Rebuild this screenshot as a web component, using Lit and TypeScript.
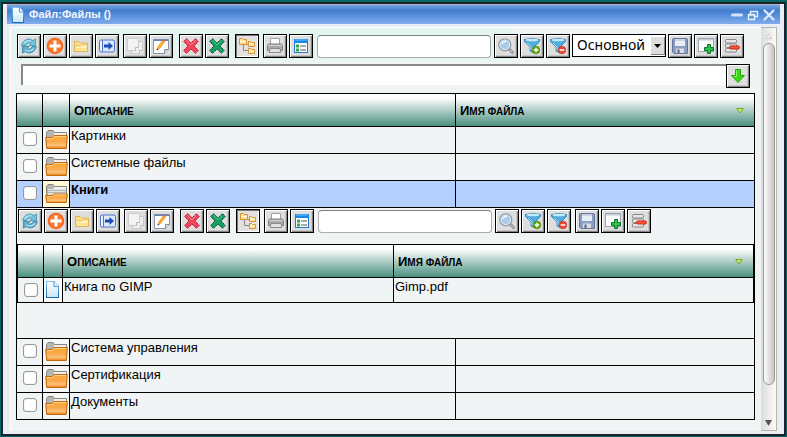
import { LitElement, html, css, svg } from "lit";
import { customElement, property } from "lit/decorators.js";

const icons: Record<string, unknown> = {
  refresh: svg`
    <path d="M.6 7.500C1.500 3 5.500.300 9.500 1.300L12 2.600 14.500.800V7.500H8L10 5.400C8 4.300 5.800 5 4.800 7.500Z" fill="#74c3dc" stroke="#3f93b0" stroke-width=".8"/>
    <path d="M15.400 8.500C14.500 13 10.500 15.700 6.500 14.700L4 13.400 1.500 15.200V8.500H8L6 10.600C8 11.700 10.200 11 11.200 8.500Z" fill="#5fb0d0" stroke="#35839f" stroke-width=".8"/>
    <path d="M2.500 5.800Q5.500 1.800 10 3M4 12Q9 14.500 13 10.500" fill="none" stroke="#b4e4f0" stroke-width="1.200"/>`,
  add: svg`
    <circle cx="8" cy="8" r="8.300" fill="#f4631c"/>
    <circle cx="8" cy="8" r="7" fill="#fb7a30"/>
    <path d="M6.500 2.500h3v4h4v3h-4v4h-3v-4h-4v-3h4z" fill="#fff"/>`,
  folder: svg`
    <path d="M1.500 13.500v-10h4.500l1.500 1.500h7v8.500z" fill="#fbdf8e" stroke="#e5b452"/>
    <path d="M3 12.500V8h5l1-1h4.500v5.500z" fill="#fff3bd"/>
    <path d="M3 12.500V10h10.500v2.500z" fill="#fce394"/>
    <path d="M3 7.800h5l1-1h4.500" fill="none" stroke="#e5b452" stroke-width=".8"/>`,
  move: svg`
    <rect x=".5" y="2" width="15" height="12" rx="1.500" fill="#dce8fc" stroke="#4a74d0"/>
    <path d="M3.500 2.500v11" stroke="#4a74d0"/><path d="M2 3v10" stroke="#fff"/>
    <path d="M5 6.500h4.500V4l4.500 4-4.500 4V9.500H5z" fill="#1d4cb4"/>`,
  copy: svg`
    <path d="M4.500 3.500h11v9l-3 3h-8z" fill="#eee" stroke="#cacaca"/>
    <path d="M.5.500h11v9l-3 3h-8z" fill="#f4f4f4" stroke="#cacaca"/>
    <path d="M8.500 12.500v-3h3M12.500 15.500v-3h3" fill="#fff" stroke="#b5b5b5"/>`,
  edit: svg`
    <path d="M.5 1.500h15v10l-4 4h-11z" fill="#fff" stroke="#8493a8"/>
    <path d="M.5 1.500h15v1.500h-15z" fill="#6485b3"/>
    <path d="M15.500 11.500h-4v4" fill="#dce2ea" stroke="#7e8fa6"/>
    <path d="M3.800 12 5 8.500 9.500 2.500l2 1.500-4.500 6z" fill="#fbb22c" stroke="#db8620" stroke-width=".6"/>
    <path d="m3.500 12.600.7-2.100 1.500 1.200z" fill="#444"/><path d="m9.400 2.600.8-1.100 2 1.500-.8 1.100z" fill="#e86060"/>`,
  remove: svg`
    <path d="M3.500.700 8 5 12.500.700 15.300 3.500 11 8l4.300 4.500-2.800 2.800L8 11l-4.500 4.300L.700 12.500 5 8 .700 3.500z" fill="#f2455a" stroke="#b8162c" stroke-dasharray="2 .5"/>
    <path d="M3.500 2.400 8 6.800l4.500-4.400" fill="none" stroke="#ff8a94"/>`,
  excel: svg`
    <path d="M3.500.700 8 5 12.500.700 15.300 3.500 11 8l4.300 4.500-2.800 2.800L8 11l-4.500 4.300L.700 12.500 5 8 .700 3.500z" fill="#16a064" stroke="#05502c" stroke-dasharray="2 .5"/>
    <path d="M3.500 2.400 8 6.800l4.500-4.400" fill="none" stroke="#51c78f"/>`,
  tree: svg`
    <path d="M4.500 6.500v6H9M4.500 6.500H9" fill="none" stroke="#888"/>
    <g fill="#ffe29a" stroke="#dd9235">
      <path d="M.5 6.500v-6h3l1 1h3v5z"/><path d="M9.500 8.500v-5h2l1 1h3v4z"/><path d="M9.500 15.500v-5h2l1 1h3v4z"/>
    </g>
    <path d="M1 3.500h6M10 6h5M10 13h5" stroke="#fffbe0"/>`,
  print: svg`
    <path d="M3.500 6.500v-6h9v6" fill="#fff" stroke="#a0a0a0"/>
    <path d="M1.500 6h13l1 1.500v5h-15v-5z" fill="#aaa" stroke="#808080"/>
    <path d="M1 7.500h14" stroke="#d4d4d4"/>
    <path d="M3 10.500h10l.8 4H2.200z" fill="#e2e2e2" stroke="#8c8c8c"/>`,
  form: svg`
    <rect x="1.500" y="1.500" width="13" height="13" fill="#fff" stroke="#2775c8"/>
    <path d="M1 1h14v4H1z" fill="#1688ea"/><path d="M2 2h12" stroke="#6bc2ff"/>
    <path d="M3 6.500h3v3H3zM3 10.500h3v3H3z" fill="#2fa852"/>
    <path d="M7 8h6M7 12h6" stroke="#555"/>`,
  find: svg`
    <path d="m11 11 3.500 3.500" stroke="#8a9197" stroke-width="3" stroke-linecap="round"/>
    <path d="m12 12 2.300 2.300" stroke="#d4d8da" stroke-linecap="round"/>
    <circle cx="6.800" cy="6.800" r="6" fill="#a9cbe9" stroke="#959da5" stroke-width="1.300"/>
    <circle cx="6.800" cy="6.800" r="4.800" fill="none" stroke="#dfeefa"/>
    <path d="M4 6q1-3 4-2.500" fill="none" stroke="#fff" stroke-width="1.300"/>`,
  filterAdd: svg`
    <path d="M.5 1.500Q8-.5 15.500 1.500v2L10 9v6l-4-2V9L.5 3.500z" fill="#4faede" stroke="#2878ac" stroke-width=".8"/>
    <ellipse cx="8" cy="2" rx="6.500" ry="1.300" fill="#c7eafa"/><path d="m3 5 4 4v3" fill="none" stroke="#b6e2f7"/>
    <circle cx="12" cy="12" r="3.800" fill="#63a90c" stroke="#477e05" stroke-width=".6"/>
    <path d="M12 9.700v4.600M9.700 12h4.600" stroke="#fff" stroke-width="1.400"/>`,
  filterRemove: svg`
    <path d="M.5 1.500Q8-.5 15.500 1.500v2L10 9v6l-4-2V9L.5 3.500z" fill="#4faede" stroke="#2878ac" stroke-width=".8"/>
    <ellipse cx="8" cy="2" rx="6.500" ry="1.300" fill="#c7eafa"/><path d="m3 5 4 4v3" fill="none" stroke="#b6e2f7"/>
    <circle cx="12" cy="12" r="3.800" fill="#e94a35" stroke="#b82c1a" stroke-width=".6"/>
    <path d="M9.700 12h4.600" stroke="#fff" stroke-width="1.500"/>`,
  save: svg`
    <path d="M.5 1.500q0-1 1-1h13q1 0 1 1v14H2l-1.500-1.500z" fill="#8b9dc2" stroke="#66749a"/>
    <path d="M3 1h10v7H3z" fill="#e9eef6"/><path d="M3 1h10v2H3z" fill="#c8d3e6"/>
    <path d="M4 10.500h8V15H4z" fill="#d9dde3"/><path d="M5.500 11.500h2V15h-2z" fill="#55617e"/>`,
  windowAdd: svg`
    <rect x=".5" y=".5" width="15" height="13" fill="#fdfdfd" stroke="#9aa5b0"/>
    <path d="M1 1h14v1.500H1z" fill="#c3ced9"/>
    <path d="M9.500 6.500h3v3h3v3h-3v3h-3v-3h-3v-3h3z" fill="#28c24c" stroke="#0a7524"/>`,
  rowRemove: svg`
    <g fill="#e8e8e8" stroke="#848484"><rect x="1.500" y="1.500" width="11" height="3.500" rx="1"/>
    <rect x="1.500" y="6" width="11" height="3.500" rx="1"/><rect x="1.500" y="10.500" width="11" height="3.500" rx="1"/></g>
    <rect x="5.500" y="8" width="10" height="3" rx="1.500" fill="#ff5a3c" stroke="#c81e10"/>`,
  down: svg`<path d="M5.500 1.500h5v6h4L8 14.500 1.500 7.500h4z" fill="#2fe00c" stroke="#28a410"/><path d="M6.500 2.500v6H4" fill="none" stroke="#8cf364"/>`,
};

const icon = (name: string) =>
  html`<svg width="16" height="16" viewBox="0 0 16 16" overflow="visible" aria-hidden="true">${icons[name]}</svg>`;

const folderIcon = (open: boolean) => html`
  <svg class="folder" width="23" height="20" viewBox="0 0 23 20" aria-hidden="true">
    <defs><linearGradient id="orange" x2="0" y2="1">
      <stop stop-color="#ffa734"/><stop offset=".5" stop-color="#f8a94c"/><stop offset=".75" stop-color="#fbc27c"/><stop offset="1" stop-color="#ec8012"/>
    </linearGradient></defs>
    <path d="M1.500 16V2.500L3 .500h5L9.500 2.500H21.500V16z" fill="#b4b6b0" stroke="#85877f"/>
    <path d="M9 4h12" stroke="#f0f0ee" stroke-width="2"/>
    ${open
      ? svg`<path d="M3 5h17.500v6H3z" fill="#e4e4e0"/><path d="M3 6.500h17M3 8.500h17" stroke="#b4b6b0"/>
          <path d="M.700 11.500H7l2-1.500h13.300l-1 8.500H1.700z" fill="url(#orange)" stroke="#c4680f"/>
          <path d="M2 12.500h5.500l2-1.500H21" fill="none" stroke="#ffd08a"/>`
      : svg`<path d="M.700 7.500H7L9 5.500h13.300l-1 13H1.700z" fill="url(#orange)" stroke="#c4680f"/>
          <path d="M2 8.500h5.500l2-2H21" fill="none" stroke="#ffd08a"/>`}
  </svg>`;

const docIcon = (w: number, h: number) => html`
  <svg class="doc" width=${w} height=${h} viewBox="0 0 13 16" preserveAspectRatio="none" aria-hidden="true">
    <defs><linearGradient id="page" x2="0" y2="1"><stop stop-color="#fff"/><stop offset="1" stop-color="#c8e6f8"/></linearGradient>
    <linearGradient id="edge" x2="0" y2="1"><stop stop-color="#7cc0ea"/><stop offset="1" stop-color="#1467b0"/></linearGradient></defs>
    <path d="M.5.500h7.500l4.500 4.500v10.500H.5z" fill="url(#page)" stroke="url(#edge)"/>
    <path d="M8 .500v4.500h4.500" fill="#fff" stroke="#3c94d0"/>
  </svg>`;

const sortMark = html`
  <svg class="sort" width="8" height="6" viewBox="0 0 8 6" aria-hidden="true">
    <path d="M.7.500h6.600L4 5z" fill="#c8ea70" stroke="#7aaa1c"/>
  </svg>`;

const buttonStyles = css`
  button.tool {
    box-sizing: border-box;
    flex: none;
    width: 24px;
    height: 24px;
    padding: 2px;
    border: 1px solid #000;
    background: #dedede;
    box-shadow: inset 1px 1px #fff, inset -1px -1px #848484, inset -2px -2px #c8c8c8;
    display: grid;
    place-items: center;
  }
  button.pressed {
    background: #e4e0e0;
    box-shadow: inset 1px 1px #777, inset -1px -1px #fff;
  }
  svg { display: block; }
`;

const labels: Record<string, string> = {
  refresh: "Обновить", add: "Добавить", folder: "Новая папка", move: "Переместить",
  copy: "Копировать", edit: "Изменить", remove: "Удалить", excel: "Исключить",
  tree: "Дерево", print: "Печать", form: "Форма", find: "Найти",
  filterAdd: "Добавить фильтр", filterRemove: "Снять фильтр",
  save: "Сохранить", windowAdd: "Новое окно", rowRemove: "Удалить строку",
};

@customElement("tool-bar")
class ToolBar extends LitElement {
  @property({ type: Boolean }) views = false;

  static styles = [buttonStyles, css`
    :host { display: flex; align-items: flex-start; gap: 4px; }
    .group { display: flex; gap: 2px; }
    .wide { margin: 0 2px; }
    .query {
      box-sizing: border-box;
      flex: 0 1 174px;
      min-width: 40px;
      height: 23px;
      margin: 1px -1px 0 0;
      padding: 2px 4px;
      border: 1px solid #aaa;
      border-top-color: #808080;
      border-radius: 4px;
      background: #fff;
      font: 13px "Liberation Sans", sans-serif;
    }
    .picker { position: relative; display: block; width: 94px; height: 23px; }
    select {
      appearance: none;
      box-sizing: border-box;
      width: 100%;
      height: 100%;
      margin: 0;
      padding: 0 16px 2px 4px;
      border: 1px solid #000;
      border-radius: 0;
      background: #fff;
      color: #000;
      font: 14px "Noto Sans", sans-serif;
    }
    .arrow {
      position: absolute;
      top: 2px;
      right: 1px;
      width: 15px;
      height: 19px;
      background: #dedede;
      box-shadow: inset 1px 1px #fff, inset -1px -1px #848484;
      display: grid;
      place-items: center;
      pointer-events: none;
    }
  `];

  private tools(names: string[]) {
    return names.map((n) => html`
      <button type="button" class="tool ${n === "tree" ? "pressed" : ""}" aria-label=${labels[n]}>${icon(n)}</button>`);
  }

  render() {
    return html`
      <div class="group">${this.tools(["refresh", "add", "folder", "move"])}</div>
      <div class="group">${this.tools(["copy", "edit"])}</div>
      <div class="group wide">${this.tools(["remove", "excel"])}</div>
      <div class="group">${this.tools(["tree"])}</div>
      <div class="group">${this.tools(["print", "form"])}</div>
      <input class="query" type="text" aria-label="Поиск">
      <div class="group">
        ${this.tools(["find", "filterAdd", "filterRemove"])}
        ${this.views
          ? html`<label class="picker">
              <select aria-label="Вид"><option>Основной</option></select>
              <span class="arrow"><svg width="7" height="4" viewBox="0 0 7 4"><path d="M0 0h7L3.500 4z"/></svg></span>
            </label>${this.tools(["save", "windowAdd", "rowRemove"])}`
          : ""}
      </div>
      ${this.views ? "" : html`<div class="group">${this.tools(["save", "windowAdd", "rowRemove"])}</div>`}
    `;
  }
}

interface Folder { name: string; open?: boolean; }

@customElement("app-root")
class AppRoot extends LitElement {
  private folders: Folder[] = [
    { name: "Картинки" }, { name: "Системные файлы" }, { name: "Книги", open: true },
    { name: "Система управления" }, { name: "Сертификация" }, { name: "Документы" },
  ];

  static styles = [buttonStyles, css`
    :host {
      box-sizing: border-box;
      display: flex;
      min-height: 100vh;
      padding: 2px 1px 1px;
      background: #006666;
      color: #000;
      font: 13px/15px "Liberation Sans", Arial, sans-serif;
    }
    .window {
      flex: 1;
      min-width: 0;
      display: flex;
      flex-direction: column;
      border: 2px solid #1f2329;
      background: #e9edf4;
    }
    .title {
      box-sizing: border-box;
      height: 20px;
      margin: 0 4px;
      padding: 1px 5px 0;
      display: flex;
      align-items: center;
      border-top: 1px solid #b0b4be;
      background: linear-gradient(#76a5e4, #427dce 30%, #5b92dc 60%, #82adee);
    }
    .title .doc { flex: none; }
    h1 {
      flex: 1;
      margin: 0 0 3px 5px;
      color: #f0f5fc;
      font-size: 11px;
      line-height: 14px;
    }
    .controls { display: flex; gap: 4px; }
    .controls button { padding: 0; border: 0; background: none; }
    .body { flex: 1; display: flex; margin: 3px 7px; }
    .content {
      flex: 1;
      min-width: 0;
      padding: 6px 6px 10px 5px;
      border: solid #fff;
      border-width: 1px 0 0 1px;
      background: linear-gradient(#e4f4f0, #e4f4f0) 0 0 / 502px 32px no-repeat #f0f4f4;
    }
    .main-tools { margin-left: 1px; }
    .address { display: flex; margin: 6px 5px 5px; }
    .address input {
      box-sizing: border-box;
      flex: 1;
      min-width: 0;
      height: 21px;
      padding: 0 4px;
      border: solid #888;
      border-width: 2px 0 0 2px;
      background: #fff;
      font: inherit;
    }
    table {
      width: 100%;
      table-layout: fixed;
      border-spacing: 0;
      border: solid #000;
      border-width: 1px 0 0 1px;
    }
    .check { width: 26px; }
    .kind { width: 27px; }
    .text { width: 386px; }
    .inner .kind { width: 19px; }
    .inner .text { width: 331px; }
    th, td {
      box-sizing: border-box;
      border: solid #000;
      border-width: 0 1px 1px 0;
      padding: 0;
      vertical-align: top;
      text-align: left;
    }
    th {
      height: 33px;
      vertical-align: middle;
      background: linear-gradient(#fff 12%, #4a9080);
    }
    td { height: 27px; padding: 1px; }
    .inner td { height: 25px; }
    .heading { display: flex; align-items: center; justify-content: space-between; padding: 2px 10px 0 4px; }
    .caption { display: block; font-size: 10px; text-transform: uppercase; }
    .caption::first-letter { font-size: 13px; }
    td.mark { padding: 5px 0 0 6px; }
    td.icon { padding: 3px 0 0 2px; background: #f5f6f6; }
    .inner td.icon { background: #fafafa; }
    .selected td { background: #b4d0ff; font-weight: bold; }
    .selected td.icon { background: #fff9d8; }
    input[type="checkbox"] {
      appearance: none;
      display: block;
      box-sizing: border-box;
      width: 14px;
      height: 14px;
      margin: 0;
      border: 1px solid #999;
      border-radius: 3px;
      background: #fff;
      box-shadow: inset 0 0 1px #aaa;
    }
    td.nested { padding: 1px 0 35px; }
    .nested tool-bar { margin: 0 0 11px 1px; }
    .scroll {
      box-sizing: border-box;
      width: 16px;
      display: flex;
      flex-direction: column;
      border: solid #b8b4a8;
      border-width: 1px 1px 1px 0;
      background: linear-gradient(90deg, #dcdcdc, #fafafa);
    }
    .step { flex: none; height: 15px; display: grid; place-items: center; }
    .track { flex: 1; padding: 0 1px 0 2px; }
    .thumb {
      box-sizing: border-box;
      height: 92%;
      border: 1px solid #999;
      border-radius: 6px;
      background: linear-gradient(90deg, #fff, #ececec 30%, #c6c6c6);
    }
  `];

  private head() {
    return html`<thead><tr>
      <th class="check"></th><th class="kind"></th>
      <th class="text"><div class="heading"><span class="caption">Описание</span></div></th>
      <th><div class="heading"><span class="caption">Имя файла</span>${sortMark}</div></th>
    </tr></thead>`;
  }

  private row(f: Folder) {
    return html`
      <tr class=${f.open ? "selected" : ""}>
        <td class="mark"><input type="checkbox" aria-label=${f.name}></td>
        <td class="icon">${folderIcon(!!f.open)}</td>
        <td>${f.name}</td><td></td>
      </tr>
      ${f.open ? html`<tr><td class="nested" colspan="4">
        <tool-bar></tool-bar>
        <table class="inner">
          ${this.head()}
          <tbody><tr>
            <td class="mark"><input type="checkbox" aria-label="Книга по GIMP"></td>
            <td class="icon">${docIcon(13, 17)}</td>
            <td>Книга по GIMP</td><td>Gimp.pdf</td>
          </tr></tbody>
        </table>
      </td></tr>` : ""}`;
  }

  render() {
    return html`
      <main class="window">
        <header class="title">
          ${docIcon(12, 16)}
          <h1>Файл:Файлы ()</h1>
          <div class="controls">
            <button type="button" aria-label="Свернуть"><svg width="12" height="12" viewBox="0 0 12 12"><path d="M1.500 6h9" stroke="#d4e2f8" stroke-width="3" stroke-linecap="round"/></svg></button>
            <button type="button" aria-label="Восстановить"><svg width="12" height="12" viewBox="0 0 12 12"><path d="M3.500 5V2.500h7v5H8M3 2.500h8M1.500 5.500h6v5h-6zM1 6h7" fill="none" stroke="#e8f0fc" stroke-width="1.400"/></svg></button>
            <button type="button" aria-label="Закрыть"><svg width="12" height="12" viewBox="0 0 12 12"><path d="m1.500 1.500 9 9m0-9-9 9" stroke="#e0ebfb" stroke-width="2.200" stroke-linecap="round"/></svg></button>
          </div>
        </header>
        <div class="body">
          <section class="content">
            <tool-bar class="main-tools" views></tool-bar>
            <div class="address">
              <input type="text" aria-label="Адрес">
              <button type="button" class="tool" aria-label="Перейти">${icon("down")}</button>
            </div>
            <table>
              ${this.head()}
              <tbody>${this.folders.map((f) => this.row(f))}</tbody>
            </table>
          </section>
          <div class="scroll" aria-hidden="true">
            <div class="step"><svg width="7" height="6" viewBox="0 0 7 6"><path d="M.5 5.500h6l-3-5z" fill="#eee" stroke="#ccc"/></svg></div>
            <div class="track"><div class="thumb"></div></div>
            <div class="step"><svg width="7" height="6" viewBox="0 0 7 6"><path d="M0 0h7L3.500 6z" fill="#555"/></svg></div>
          </div>
        </div>
      </main>`;
  }
}
